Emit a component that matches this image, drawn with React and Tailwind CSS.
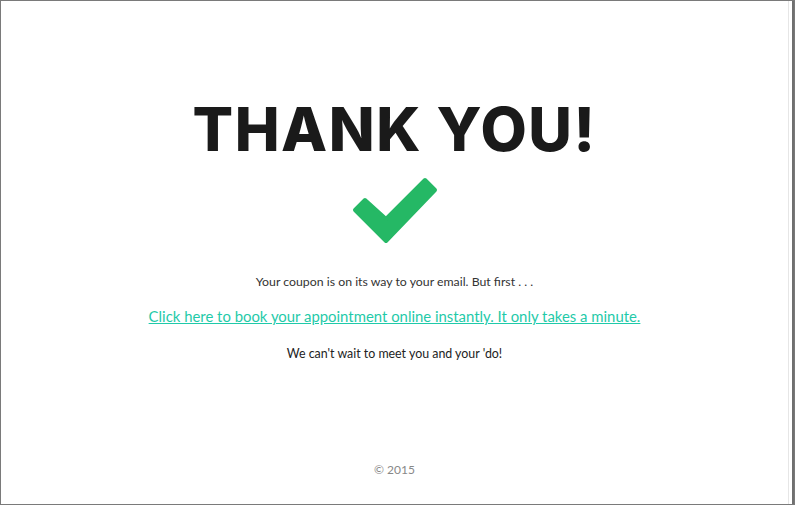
export default function App() {
  return (
    <div className="w-[795px] h-[505px] bg-white border border-[#7a7a7a] flex" style={{ fontFamily: "Lato, 'Open Sans', sans-serif" }}>
      <div className="flex-1 flex flex-col items-center">
        <h1 className="mt-[98px] text-[60px] leading-none font-extrabold tracking-[0.025em] text-[#1a1a1a]" style={{ fontFamily: "Inter, sans-serif" }}>
          THANK YOU!
        </h1>
        <svg className="mt-[18px]" width="86" height="68" viewBox="352 178 86 68">
          <polygon
            points="386,242 355,211 365,201 386,220 425,181 435,191"
            fill="#25b865"
            stroke="#25b865"
            strokeWidth="4"
            strokeLinejoin="round"
          />
        </svg>
        <p className="mt-[27px] text-[12.3px] leading-5 text-[#333]">Your coupon is on its way to your email. But first . . .</p>
        <a href="#" className="mt-[12px] text-[14.9px] leading-6 text-[#1fcaa9] underline">Click here to book your appointment online instantly. It only takes a minute.</a>
        <p className="mt-[16px] text-[12.4px] leading-5 text-[#222]">We can't wait to meet you and your 'do!</p>
        <p className="mt-[96px] text-[12px] leading-5 text-[#888]">© 2015</p>
      </div>
      <div className="w-[6px] border-l border-[#e6e6e6] bg-white flex justify-end">
        <div className="w-[2px] bg-[#707070]" />
      </div>
    </div>
  );
}
